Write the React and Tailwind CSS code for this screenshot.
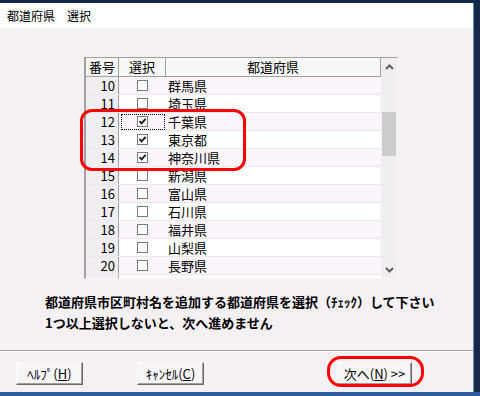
import React from 'react';

const rows = [
  [10, '群馬県', false],
  [11, '埼玉県', false],
  [12, '千葉県', true],
  [13, '東京都', true],
  [14, '神奈川県', true],
  [15, '新潟県', false],
  [16, '富山県', false],
  [17, '石川県', false],
  [18, '福井県', false],
  [19, '山梨県', false],
  [20, '長野県', false],
  [21, '岐阜県', false],
];

function CheckBox({checked}) {
  return (
    <span className="w-[11px] h-[11px] border border-[#7a7a7a] bg-white flex items-center justify-center">
      {checked && (
        <svg width="9" height="9" viewBox="0 0 9 9">
          <path d="M1.5 4.2 L3.6 6.4 L7.6 1.8" stroke="#1a1a1a" strokeWidth="1.8" fill="none" />
        </svg>
      )}
    </span>
  );
}

function Chevron({down = false}) {
  return (
    <svg width="9" height="6" viewBox="0 0 9 6">
      <path d={down ? 'M1 1 L4.5 4.5 L8 1' : 'M1 5 L4.5 1.5 L8 5'} stroke="#606060" strokeWidth="2" fill="none" />
    </svg>
  );
}

function Row({num, name, checked, focus, even}) {
  return (
    <div className={`flex h-[18px] shrink-0 border-b border-[#eee6ee] ${even ? 'bg-[#fbf4fb]' : 'bg-white'}`}>
      <div className="w-[33px] bg-[#f0eef0] border-r border-[#a0a0a0] text-right pr-[3px] leading-[17px]">{num}</div>
      <div className="w-[47px] flex items-center justify-center">
        <div className={`w-[44px] h-[16px] flex items-center justify-center ${focus ? 'border border-dotted border-black' : ''}`}>
          <CheckBox checked={checked} />
        </div>
      </div>
      <div className="flex-1 pl-[2px] leading-[17px]">{name}</div>
    </div>
  );
}

function Button({children, className = ''}) {
  return (
    <button className={`h-[23px] bg-[#f7f5f7] border border-t-white border-l-white border-r-[#696969] border-b-[#696969] shadow-[inset_-1px_-1px_0_#a0a0a0] text-[13px] leading-none text-black ${className}`}>
      {children}
    </button>
  );
}

export default function App() {
  return (
    <div className="w-[480px] h-[396px] overflow-hidden bg-[#2b5c9c] font-['Noto_Sans_CJK_JP',sans-serif] text-black relative">
      <div className="h-[392px] flex flex-col border-t-[3px] border-r-[6px] border-[#14284a]">
        {/* title */}
        <div className="h-[25px] bg-white flex items-center pl-[7px] text-[12px] border-r border-[#6f8fb8]">
          都道府県　選択
        </div>

        {/* body */}
        <div className="flex-1 bg-[#f4f0f4] flex flex-col pt-[29px] border-r border-[#6f8fb8]">
          <div className="ml-[84px] w-[314px] h-[222px] flex border-t border-l-2 border-[#a0a0a0] border-b border-b-[#f8f8f8] border-r border-r-[#f8f8f8] text-[13px] overflow-hidden">
            <div className="flex-1 flex flex-col overflow-hidden">
              <div className="flex h-[19px] shrink-0 bg-[#f7f7f7] border-b border-[#a0a0a0] leading-[18px]">
                <div className="w-[33px] border-r border-[#a0a0a0] text-center">番号</div>
                <div className="w-[47px] border-r border-[#a0a0a0] text-center">選択</div>
                <div className="flex-1 border-r border-[#a0a0a0] text-center">都道府県</div>
              </div>
              {rows.map(([num, name, checked], i) => (
                <Row key={num} num={num} name={name} checked={checked} focus={num === 12} even={i % 2 === 0} />
              ))}
            </div>
            <div className="w-[16px] bg-[#f0eef0] flex flex-col">
              <div className="h-[17px] flex items-center justify-center"><Chevron /></div>
              <div className="flex-1 px-[1px]">
                <div className="mt-[37px] h-[44px] bg-[#cdcdcd]" />
              </div>
              <div className="h-[17px] flex items-center justify-center"><Chevron down /></div>
            </div>
          </div>

          <div className="ml-[45px] mt-[12px] text-[13px] font-bold leading-[21px]">
            <div>都道府県市区町村名を追加する都道府県を選択（ﾁｪｯｸ）して下さい</div>
            <div>1つ以上選択しないと、次へ進めません</div>
          </div>

          <div className="mt-[17px] border-t border-[#a0a0a0] border-b border-b-white" />

          <div className="flex items-center mt-[10px]">
            <Button className="ml-[16px] w-[67px]">ﾍﾙﾌﾟ(<u>H</u>)</Button>
            <Button className="ml-[54px] w-[67px]">ｷｬﾝｾﾙ(<u>C</u>)</Button>
            <Button className="ml-[133px] w-[75px]">次へ(<u>N</u>) &gt;&gt;</Button>
          </div>
        </div>
      </div>

      {/* red annotation marks */}
      <div className="absolute left-[80px] top-[109px] w-[166px] h-[62px] border-[3px] border-[#ff0000] rounded-[12px]" />
      <div className="absolute left-[327px] top-[356px] w-[97px] h-[31px] border-[3px] border-[#ff0000] rounded-[14px]" />
    </div>
  );
}
